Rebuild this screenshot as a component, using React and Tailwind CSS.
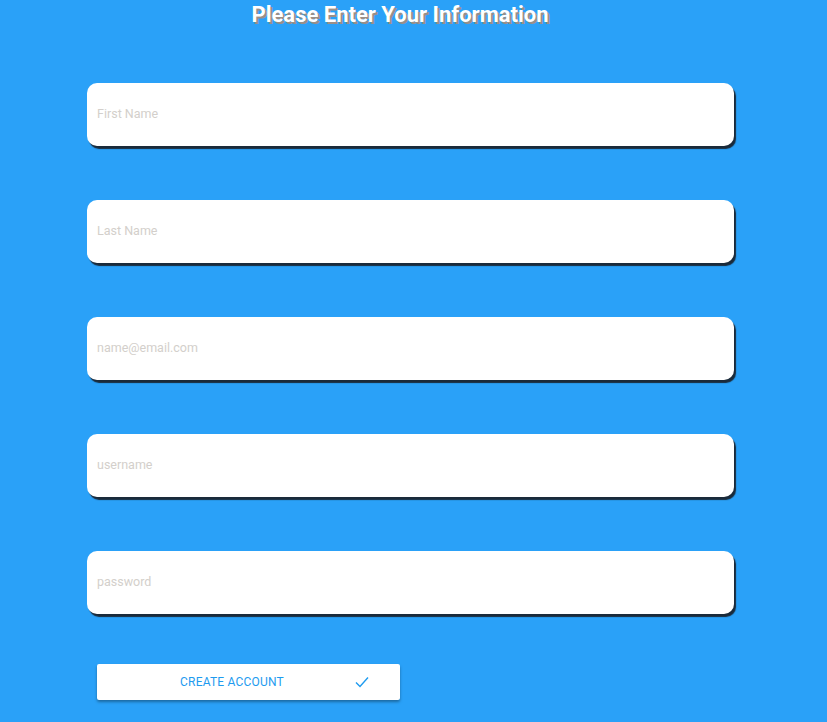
export default function App() {
  const fields = ["First Name", "Last Name", "name@email.com", "username", "password"];
  return (
    <div className="w-[827px] h-[722px] bg-[#2aa1f8] overflow-hidden" style={{ fontFamily: 'Roboto, "Liberation Sans", sans-serif' }}>
      <div className="w-[800px] pt-[1px] text-center">
        <h1 className="text-[22px] font-bold text-white leading-[28px] [text-shadow:2px_2px_0_#9a8f88]">
          Please Enter Your Information
        </h1>
      </div>
      <div className="pl-[87px] pt-[54px] flex flex-col gap-[54px]">
        {fields.map((f) => (
          <input
            key={f}
            placeholder={f}
            className="w-[647px] h-[63px] bg-white rounded-[10px] shadow-[2px_3px_1px_#1a2a3a] px-[10px] pb-[3px] text-[12.5px] text-gray-700 placeholder:text-[#d3cfcb] outline-none"
          />
        ))}
      </div>
      <div className="pl-[97px] pt-[50px]">
        <button className="relative w-[303px] h-[36px] bg-white rounded-[2px] shadow-[0_2px_3px_rgba(0,0,0,0.35)] flex items-center">
          <span className="absolute left-0 w-[270px] text-center text-[12px] tracking-[0.2px] text-[#1e9bef]">CREATE ACCOUNT</span>
          <svg className="absolute left-[258px] top-[12px]" width="14" height="12" viewBox="0 0 14 12" fill="none">
            <path d="M1 6.5 L5 10.5 L13 1.5" stroke="#1e9bef" strokeWidth="1.4" />
          </svg>
        </button>
      </div>
    </div>
  );
}
